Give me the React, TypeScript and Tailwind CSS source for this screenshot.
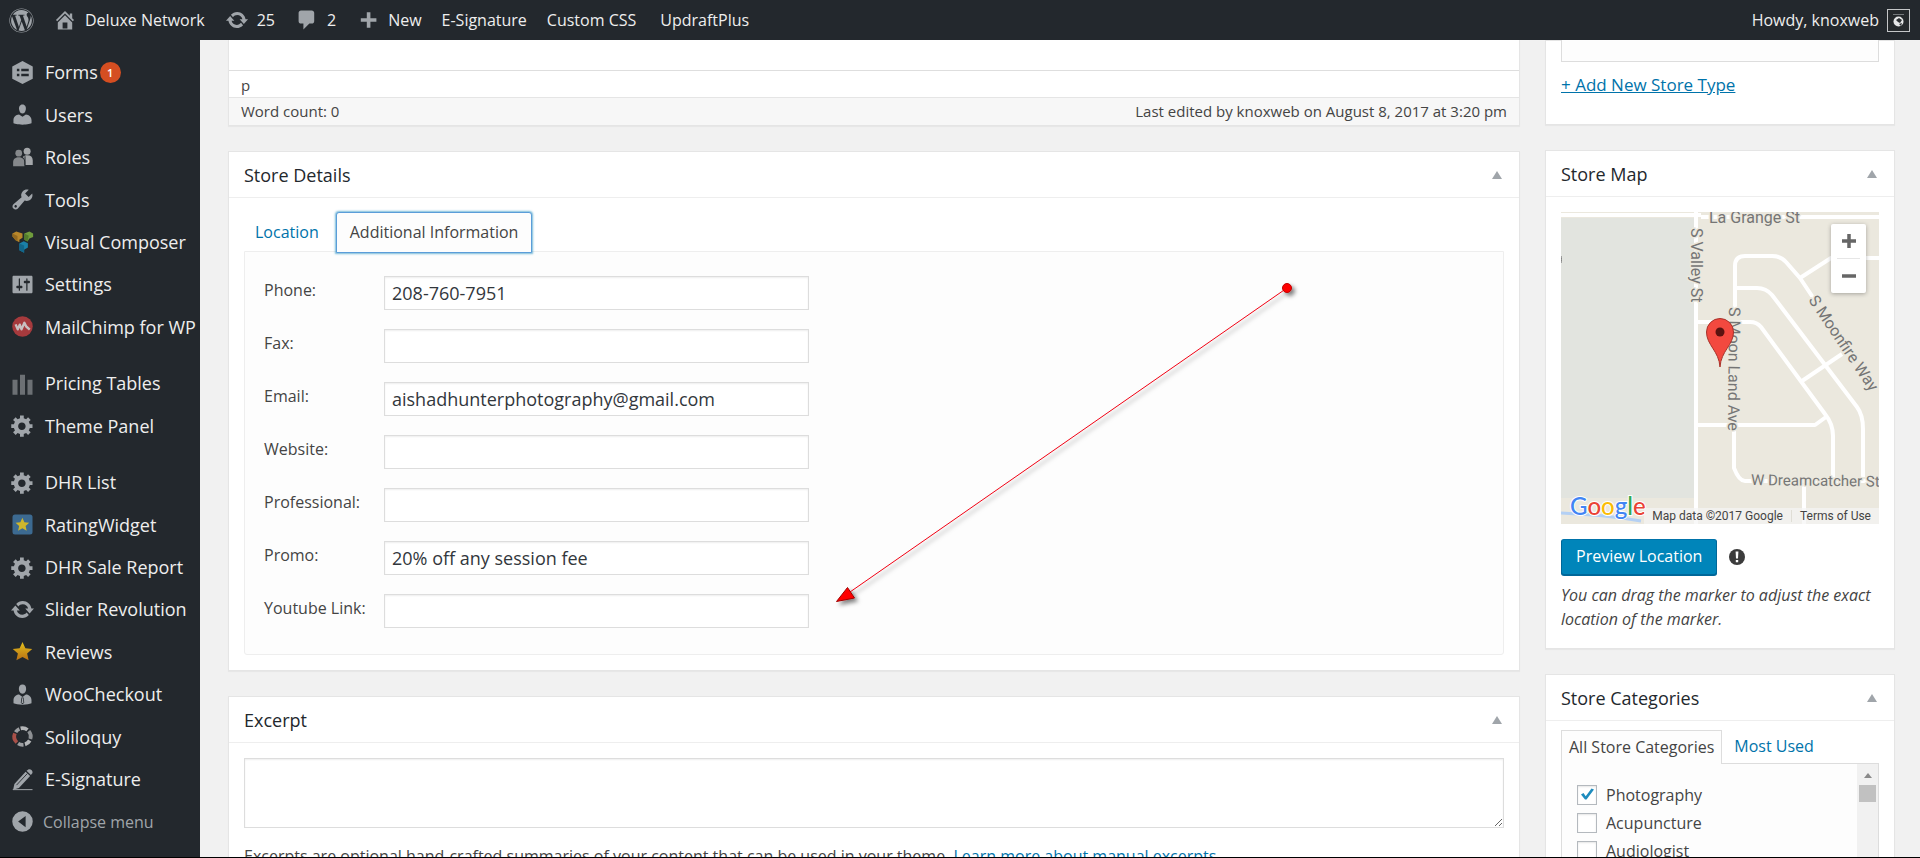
import type { ReactNode } from 'react';
import { FaWordpress } from 'react-icons/fa';

type IconProps = { className?: string };

const PATHS = {
    home: 'M16 8.5l1.53 1.53-1.06 1.06L10 4.6l-6.47 6.49-1.06-1.06L10 2.5l4 4v-2h2v4zm-6-2.46l6 5.99V18H4v-5.97zM12 17v-5H8v5h4z',
    update: 'M10.2 3.28c3.53 0 6.43 2.61 6.92 6h2.08l-3.5 4-3.5-4h2.32c-.45-1.97-2.21-3.45-4.32-3.45-1.45 0-2.73.71-3.54 1.78L4.95 5.66C6.23 4.2 8.11 3.28 10.2 3.28zm-.4 13.44c-3.52 0-6.43-2.61-6.92-6H.8l3.5-4c1.17 1.33 2.33 2.67 3.5 4H5.48c.45 1.97 2.21 3.45 4.32 3.45 1.45 0 2.73-.71 3.54-1.78l1.71 1.95c-1.28 1.46-3.15 2.38-5.25 2.38z',
    comment: 'M5 2h9c1.1 0 2 .9 2 2v7c0 1.1-.9 2-2 2h-2l-5 5v-5H5c-1.1 0-2-.9-2-2V4c0-1.1.9-2 2-2z',
    plus: 'M17 8.5v3h-5v5H9v-5H4v-3h5v-5h3v5z',
    user: 'M10 9.25c-2.27 0-2.73-3.44-2.73-3.44C7 4.02 7.82 2 9.97 2c2.16 0 2.98 2.02 2.71 3.81 0 0-.41 3.44-2.68 3.44zm0 2.57L12.72 10c2.39 0 4.52 2.33 4.52 4.53v2.49s-3.65 1.13-7.24 1.13c-3.65 0-7.24-1.13-7.24-1.13v-2.49c0-2.25 1.94-4.48 4.47-4.48z',
    tools: 'M16.68 9.77c-1.34 1.34-3.3 1.67-4.95.99l-5.41 6.52c-.99.99-2.59.99-3.58 0s-.99-2.59 0-3.57l6.52-5.42c-.68-1.65-.35-3.61.99-4.95 1.28-1.28 3.12-1.62 4.72-1.06l-2.89 2.89 2.82 2.82 2.86-2.87c.53 1.58.18 3.39-1.08 4.65zM3.81 16.21c.4.39 1.04.39 1.43 0 .4-.4.4-1.04 0-1.43-.39-.4-1.03-.4-1.43 0-.39.39-.39 1.03 0 1.43z',
    settings: 'M18 16V4c0-.55-.45-1-1-1H3c-.55 0-1 .45-1 1v12c0 .55.45 1 1 1h14c.55 0 1-.45 1-1zM8 11h1c.55 0 1 .45 1 1s-.45 1-1 1H8v1.5c0 .28-.22.5-.5.5s-.5-.22-.5-.5V13H6c-.55 0-1-.45-1-1s.45-1 1-1h1V5.5c0-.28.22-.5.5-.5s.5.22.5.5V11zm5-2h-1c-.55 0-1-.45-1-1s.45-1 1-1h1V5.5c0-.28.22-.5.5-.5s.5.22.5.5V7h1c.55 0 1 .45 1 1s-.45 1-1 1h-1v5.5c0 .28-.22.5-.5.5s-.5-.22-.5-.5V9z',
    gear: 'M18 12h-2.18c-.17.7-.44 1.35-.81 1.93l1.54 1.54-2.1 2.1-1.54-1.54c-.58.36-1.23.63-1.91.79V19H8v-2.18c-.68-.16-1.33-.43-1.91-.79l-1.54 1.54-2.12-2.12 1.54-1.54c-.36-.58-.63-1.23-.79-1.91H1V9.03h2.17c.16-.7.44-1.35.8-1.94L2.43 5.55l2.1-2.1 1.54 1.54c.58-.37 1.24-.64 1.93-.81V2h3v2.18c.68.16 1.33.43 1.91.79l1.54-1.54 2.12 2.12-1.54 1.54c.36.59.64 1.24.8 1.94H18V12zm-8.5 1.5c1.66 0 3-1.34 3-3s-1.34-3-3-3-3 1.34-3 3 1.34 3 3 3z',
    forms: 'M10 .8l8.2 4.3v9.8L10 19.2l-8.2-4.3V5.100zM5.500 7v2h2V7zm3.500 0v2h6V7zM5.500 11v2h2v-2zm3.500 0v2h6v-2z',
    bars: 'M2 7h4v12H2zM8 3h4v16H8zM14 7h4v12h-4z',
    collapse: 'M10 1.800a8.200 8.200 0 1 0 0 16.400a8.200 8.200 0 0 0 0-16.400zM12.500 5.500v9L6.500 10z',
};

function Icon({ name, className = 'size-[25px]' }: IconProps & { name: keyof typeof PATHS }) {
    return (
        <svg viewBox="0 0 20 20" className={className} fill="currentColor" fillRule="evenodd" aria-hidden="true">
            <path d={PATHS[name]} />
        </svg>
    );
}

function Drawing({ children }: { children: ReactNode }) {
    return (
        <svg viewBox="0 0 20 20" className="size-[25px]" aria-hidden="true">
            {children}
        </svg>
    );
}

const rolesIcon = (
    <Drawing>
        <g fill="#85888b">
            <circle cx="7" cy="6.500" r="2.700" />
            <path d="M2.500 17v-3.500c0-2.500 2-3.800 4.500-3.800s4.500 1.300 4.500 3.800V17z" />
        </g>
        <g fill="#a4a7aa">
            <circle cx="13.700" cy="5" r="2.800" />
            <path d="M10.200 9.500c1-1 2-1.400 3.500-1.400 3 0 4.500 1.500 4.500 4V16h-6v-2.500c0-1.800-.8-3-2-4z" />
        </g>
        <path d="M12 9v7" stroke="#23282d" strokeWidth=".8" />
    </Drawing>
);

const composerIcon = (
    <Drawing>
        <path d="M2 3.500l3-1.500 5 1.500v3.500l-2.500 1.500v2L4.500 9 2 6z" fill="#b8872b" />
        <path d="M2 3.500l4 2v4L4.500 9 2 6z" fill="#93691f" />
        <path d="M11.500 3.500L15.500 2l3 1.500v2.800l-3 1.200-1.500 2.500-2.500-1.500z" fill="#6f9c3c" />
        <path d="M11.500 3.500l3.500 1.800-1 4.700-2.500-1.500z" fill="#527b2c" />
        <path d="M7.500 11.500l3.500-1.700 3.300 1.500v3.500l-3 1.700V19L7.500 17z" fill="#1a80a8" />
        <path d="M7.500 11.500l3.800 1.700V19L7.500 17z" fill="#12668a" />
    </Drawing>
);

const mailchimpIcon = (
    <Drawing>
        <circle cx="10" cy="10" r="8.200" fill="#a63a3d" />
        <path
            d="M4.500 8.300l1.700 4L7.800 8.500l1.400 3.800L11.500 7l1.500 3 2.800 2.500"
            fill="none"
            stroke="#c9bfc0"
            strokeWidth="1.900"
            strokeLinejoin="round"
        />
    </Drawing>
);

const STAR = 'M10 2.300l2.300 5 5.500.6-4.100 3.700 1.200 5.400L10 14.300 5.100 17l1.200-5.400L2.200 7.900l5.500-.6z';

const ratingIcon = (
    <Drawing>
        <rect x="2" y="2" width="16" height="16" rx="2" fill="#3c6a91" />
        <path d={STAR} fill="#cdb62c" transform="translate(2.900 3) scale(.7)" />
    </Drawing>
);

const reviewsIcon = (
    <Drawing>
        <defs>
            <linearGradient id="gold" x1="0" y1="0" x2="0" y2="1">
                <stop offset="0" stopColor="#e2c01c" />
                <stop offset="1" stopColor="#b96f14" />
            </linearGradient>
        </defs>
        <path d={STAR} fill="url(#gold)" />
    </Drawing>
);

const checkoutIcon = (
    <Drawing>
        <g fill="#a0a5aa">
            <path d="M10 9.300c-2 0-2.800-2-2.900-3.700C7 3.500 8 2 10 2s3 1.500 2.900 3.600C12.800 7.300 12 9.300 10 9.300z" />
            <path d="M7.300 10L10 12l2.700-2c2.500 0 4.500 2.200 4.500 4.500V17c-1.500.7-4 1.100-7.200 1.100S4.300 17.700 2.800 17v-2.500C2.800 12.200 4.800 10 7.300 10z" />
        </g>
        <path d="M9.200 12.300h1.600l.6 4.200-1.400 1.300-1.400-1.300z" fill="#23282d" />
        <path d="M9.700 13h.7l.3 3.200-.7.700-.7-.7z" fill="#a0a5aa" />
    </Drawing>
);

const soliloquyIcon = (
    <Drawing>
        <g fill="none" strokeWidth="3">
            <path d="M7.500 3.900A6.600 6.600 0 0 0 4.500 6.500" stroke="#9c9ea1" />
            <path d="M3.900 7.500A6.600 6.600 0 0 0 5.500 14.800" stroke="#a95048" />
            <path d="M8.500 3.500A6.600 6.600 0 0 1 14 4.700" stroke="#b3b5b7" />
            <path d="M15 5.700A6.600 6.600 0 0 1 16.300 12" stroke="#8d9093" />
            <path d="M15.800 13.200A6.600 6.600 0 0 1 12 16.300" stroke="#b3b5b7" />
            <path d="M10.800 16.600A6.600 6.600 0 0 1 6.500 15.600" stroke="#9c9ea1" />
        </g>
    </Drawing>
);

const penIcon = (
    <Drawing>
        <g fill="#a0a5aa">
            <path d="M3.500 13.500L12.500 3.800l3.600 3.300-9 9.600-4.600 1.500z" />
            <path d="M13.200 3L15 1.800c1.800-.2 3.300 1.200 3 3l-1.300 1.600z" />
            <path d="M2.200 17.700H18v.8H2.200z" />
        </g>
        <path d="M5.200 14.500l8.700-9.300" stroke="#23282d" strokeWidth=".7" />
    </Drawing>
);

type MenuItem = { label: string; icon: ReactNode; badge?: number };

const menuGroups: MenuItem[][] = [
    [
        { label: 'Forms', icon: <Icon name="forms" />, badge: 1 },
        { label: 'Users', icon: <Icon name="user" /> },
        { label: 'Roles', icon: rolesIcon },
        { label: 'Tools', icon: <Icon name="tools" /> },
        { label: 'Visual Composer', icon: composerIcon },
        { label: 'Settings', icon: <Icon name="settings" /> },
        { label: 'MailChimp for WP', icon: mailchimpIcon },
    ],
    [
        { label: 'Pricing Tables', icon: <Icon name="bars" className="size-[25px] text-[#6c7074]" /> },
        { label: 'Theme Panel', icon: <Icon name="gear" /> },
    ],
    [
        { label: 'DHR List', icon: <Icon name="gear" /> },
        { label: 'RatingWidget', icon: ratingIcon },
        { label: 'DHR Sale Report', icon: <Icon name="gear" /> },
        { label: 'Slider Revolution', icon: <Icon name="update" /> },
        { label: 'Reviews', icon: reviewsIcon },
        { label: 'WooCheckout', icon: checkoutIcon },
        { label: 'Soliloquy', icon: soliloquyIcon },
        { label: 'E-Signature', icon: penIcon },
    ],
];

const storeFields = [
    { id: 'phone', label: 'Phone:', value: '208-760-7951' },
    { id: 'fax', label: 'Fax:', value: '' },
    { id: 'email', label: 'Email:', value: 'aishadhunterphotography@gmail.com' },
    { id: 'website', label: 'Website:', value: '' },
    { id: 'professional', label: 'Professional:', value: '' },
    { id: 'promo', label: 'Promo:', value: '20% off any session fee' },
    { id: 'youtube', label: 'Youtube Link:', value: '' },
];

const categories = [
    { name: 'Photography', checked: true },
    { name: 'Acupuncture', checked: false },
    { name: 'Audiologist', checked: false },
];

function AdminBar() {
    return (
        <header className="flex h-10 shrink-0 items-center justify-between bg-[#23282d] pr-[10px] text-[#eee]">
            <nav className="flex items-center">
                <a href="#wp" aria-label="About WordPress" className="pr-[19px] pl-[9px] text-[#a0a5aa]">
                    <FaWordpress className="size-[25px]" />
                </a>
                <a href="#site" className="flex items-center gap-2 pr-5">
                    <Icon name="home" className="size-6 text-[#a0a5aa]" />
                    Deluxe Network
                </a>
                <a href="#updates" className="flex items-center gap-2 pr-5">
                    <Icon name="update" className="size-6 text-[#a0a5aa]" />
                    25
                </a>
                <a href="#comments" className="flex items-center gap-2 pr-5">
                    <Icon name="comment" className="size-6 text-[#a0a5aa]" />
                    2
                </a>
                <a href="#new" className="flex items-center gap-2 pr-5">
                    <Icon name="plus" className="size-6 text-[#a0a5aa]" />
                    New
                </a>
                <a href="#esig" className="pr-5">E-Signature</a>
                <a href="#css" className="pr-6">Custom CSS</a>
                <a href="#updraft">UpdraftPlus</a>
            </nav>
            <a href="#profile" className="flex items-center gap-2">
                Howdy, knoxweb
                <svg viewBox="0 0 23 23" className="size-[23px]" aria-hidden="true">
                    <rect x=".5" y=".5" width="22" height="22" fill="#25292c" stroke="#c4c6c8" />
                    <path d="M6 5.500h11" stroke="#74787b" />
                    <circle cx="11.500" cy="12.500" r="5" fill="#e6e7e8" />
                    <path d="M9 11l3-2 3 2-2 3-2-1zM12 15l3-1-1 3z" fill="#2c3033" />
                </svg>
            </a>
        </header>
    );
}

function Sidebar() {
    return (
        <nav className="flex w-[200px] shrink-0 flex-col gap-[14px] bg-[#23282d] pt-[11px] pb-[14px] text-[#eee]">
            {menuGroups.map((group, i) => (
                <ul key={i} className="contents">
                    {group.map((item, j) => (
                        <li
                            key={item.label}
                            className={j > 0 ? '-mt-[14px] flex flex-1 items-center' : 'flex flex-1 items-center'}
                        >
                            <a href="#menu" className="flex items-center gap-[10px] pl-[10px] text-lg whitespace-nowrap">
                                <span className="text-[#a0a5aa]">{item.icon}</span>
                                <span className="flex items-center gap-[2px]">
                                    {item.label}
                                    {item.badge && (
                                        <span className="flex size-[21px] items-center justify-center rounded-full bg-[#d54e21] text-[11px] font-semibold text-white">
                                            {item.badge}
                                        </span>
                                    )}
                                </span>
                            </a>
                        </li>
                    ))}
                </ul>
            ))}
            <button
                type="button"
                className="-mt-[14px] flex flex-1 items-center gap-2 pl-[10px] text-left text-[#a0a5aa]"
            >
                <Icon name="collapse" />
                Collapse menu
            </button>
        </nav>
    );
}

function PostBox({ title, children }: { title?: string; children: ReactNode }) {
    return (
        <section className="border border-[#e5e5e5] bg-white shadow-[0_1px_1px_rgba(0,0,0,0.04)]">
            {title && (
                <div className="flex h-[46px] items-center justify-between border-b border-[#eee] pr-[17px] pl-[15px]">
                    <h2 className="text-lg font-medium text-[#23282d]">{title}</h2>
                    <button type="button" aria-label={`Toggle panel: ${title}`} className="text-[#a0a5aa]">
                        <svg viewBox="0 0 10 8" className="h-2 w-[10px]" fill="currentColor">
                            <path d="M5 0l5 8H0z" />
                        </svg>
                    </button>
                </div>
            )}
            {children}
        </section>
    );
}

/* Callout drawn over the form, pointing at the Youtube field */
function CalloutArrow() {
    return (
        <svg
            viewBox="0 0 500 360"
            className="pointer-events-none absolute top-2 left-[575px] h-[360px] w-[500px]"
            aria-hidden="true"
        >
            <defs>
                <filter id="drop" x="-10%" y="-10%" width="120%" height="120%">
                    <feDropShadow dx="3" dy="3" stdDeviation="2" floodColor="#000" floodOpacity=".5" />
                </filter>
            </defs>
            <g filter="url(#drop)">
                <path d="M467 28L30 332" stroke="#f00014" strokeWidth="1" />
                <path d="M16.500 341.500L27.500 327.500l7 10.500z" fill="#fe0000" stroke="#a00000" />
                <circle cx="467" cy="28" r="4.500" fill="#fe0000" stroke="#c00000" />
            </g>
        </svg>
    );
}

function StoreDetails() {
    return (
        <PostBox title="Store Details">
            <div className="px-[15px] pt-[14px] pb-[15px]">
                <div role="tablist" className="relative z-10 -mb-[2px] flex gap-[6px]">
                    <button type="button" role="tab" aria-selected="false" className="px-[11px] pb-[2px] text-[#0073aa]">
                        Location
                    </button>
                    <button
                        type="button"
                        role="tab"
                        aria-selected="true"
                        className="h-[41px] rounded-t-[3px] border border-[#5b9dd9] bg-[#fdfdfd] px-[13px] pb-[2px] shadow-[0_0_2px_1px_rgba(30,140,190,0.6)]"
                    >
                        Additional Information
                    </button>
                </div>
                <div className="relative flex flex-col gap-[19px] rounded-b-[3px] border border-[#eee] bg-[#fdfdfd] px-[19px] pt-6 pb-[26px]">
                    {storeFields.map((field) => (
                        <div key={field.id} className="flex items-start">
                            <label htmlFor={field.id} className="w-[120px] leading-7">
                                {field.label}
                            </label>
                            <input
                                id={field.id}
                                type="text"
                                defaultValue={field.value}
                                className="h-[34px] w-[425px] border border-[#ddd] bg-white px-[7px] text-lg text-[#32373c] shadow-[inset_0_1px_2px_rgba(0,0,0,0.07)]"
                            />
                        </div>
                    ))}
                    <CalloutArrow />
                </div>
            </div>
        </PostBox>
    );
}

function StreetMap() {
    return (
        <div className="relative overflow-hidden font-[Roboto,sans-serif]">
            <svg viewBox="0 0 318 312" className="block w-full" role="img" aria-label="Store map">
                <rect width="318" height="312" fill="#ebe8de" />
                <path d="M0 6h133v280H0z" fill="#e2e4df" />
                <path d="M0 301c25 1 50 3 80 8" fill="none" stroke="#b4d0f4" strokeWidth="3" />
                <path d="M0 44c.6 2 .6 5 0 7" fill="none" stroke="#777" />
                <g fill="none" stroke="#fff" strokeWidth="4" strokeLinejoin="round">
                    <path d="M0 3h140M140 5h178M135 0v312" />
                    <path d="M137 110h52q7 0 11 5l64 87q8 10 8 22v42" />
                    <path d="M174 96V54q0-10 10-10h27q9 0 14 6l14 16 14 21" />
                    <path d="M174 76h22q9 0 15 7l85 112q6 8 6 22v48" />
                    <path d="M239 66l31-20h48M241 169l40-27" />
                    <path d="M137 213h117l11-8" />
                    <path d="M173 218v38q5 13 11 13h134M243 272v40" />
                </g>
                <g fill="#757575" stroke="#ebe8de" strokeWidth="3" strokeLinejoin="round" paintOrder="stroke" fontSize="16">
                    <text x="148" y="11">La Grange St</text>
                    <text transform="translate(130 16) rotate(90)">S Valley St</text>
                    <text transform="translate(168 95) rotate(90.500)">S Moon Land Ave</text>
                    <text transform="translate(247 88) rotate(56)">S Moonfire Way</text>
                    <text transform="translate(190 273) rotate(.7)" fontSize="15">W Dreamcatcher St</text>
                </g>
                <path
                    d="M159 155c-1-16-13.500-22-13.500-35a13.500 13.500 0 0 1 27 0c0 13-12.500 19-13.500 35z"
                    fill="#f3493f"
                    stroke="#a8322a"
                />
                <circle cx="159" cy="120" r="4.500" fill="#5a1310" />
                <text
                    x="9"
                    y="303"
                    fontSize="24"
                    fontFamily="Lato, sans-serif"
                    fontWeight="500"
                    stroke="#fff"
                    strokeWidth="2"
                    paintOrder="stroke"
                >
                    <tspan fill="#4285f4">G</tspan>
                    <tspan fill="#ea4335">o</tspan>
                    <tspan fill="#fbbc05">o</tspan>
                    <tspan fill="#4285f4">g</tspan>
                    <tspan fill="#34a853">l</tspan>
                    <tspan fill="#ea4335">e</tspan>
                </text>
            </svg>
            <div className="absolute top-3 right-[13px] flex w-[35px] flex-col rounded-[2px] bg-white text-[#666] shadow-[0_1px_4px_rgba(0,0,0,0.3)]">
                <button type="button" aria-label="Zoom in" className="flex h-[34px] items-center justify-center">
                    <svg viewBox="0 0 14 14" className="size-[14px]">
                        <path d="M7 0v14M0 7h14" stroke="currentColor" strokeWidth="3.500" />
                    </svg>
                </button>
                <span className="mx-[6px] h-px bg-[#e6e6e6]" />
                <button type="button" aria-label="Zoom out" className="flex h-[34px] items-center justify-center">
                    <svg viewBox="0 0 14 14" className="size-[14px]">
                        <path d="M0 7h14" stroke="currentColor" strokeWidth="3.500" />
                    </svg>
                </button>
            </div>
            <div className="absolute right-0 bottom-0 flex h-4 items-center bg-[#f5f5f5]/70 text-xs leading-none text-[#444]">
                <span className="border-r border-[#e0ded6] px-2">Map data ©2017 Google</span>
                <a href="#terms" className="px-2">Terms of Use</a>
            </div>
        </div>
    );
}

function StoreMap() {
    return (
        <PostBox title="Store Map">
            <div className="px-[15px] pt-[15px] pb-[17px]">
                <StreetMap />
                <div className="mt-[15px] flex items-center gap-3">
                    <button
                        type="button"
                        className="h-9 rounded-[3px] border border-[#006799] border-t-[#0073aa] bg-[#0085ba] px-[14px] pb-[2px] text-white shadow-[0_1px_0_#006799]"
                    >
                        Preview Location
                    </button>
                    <svg viewBox="0 0 16 16" className="size-4" aria-hidden="true">
                        <circle cx="8" cy="8" r="8" fill="#3c3c3c" />
                        <path d="M6.600 2.500h2.800L9 9.500H7zM6.800 11h2.400v2.300H6.800z" fill="#fff" />
                    </svg>
                </div>
                <p className="mt-2 italic">
                    You can drag the marker to adjust the exact location of the marker.
                </p>
            </div>
        </PostBox>
    );
}

function StoreCategories() {
    return (
        <PostBox title="Store Categories">
            <div className="px-[15px] pt-[9px]">
                <div role="tablist" className="flex">
                    <button
                        type="button"
                        role="tab"
                        aria-selected="true"
                        className="relative -mb-px h-[34px] border border-b-0 border-[#ddd] bg-[#fdfdfd] px-[7px] pb-[2px]"
                    >
                        All Store Categories
                    </button>
                    <button type="button" role="tab" aria-selected="false" className="px-3 pb-px text-[#0073aa]">
                        Most Used
                    </button>
                </div>
                <div className="flex h-[250px] justify-between border border-[#ddd] bg-[#fdfdfd]">
                    <ul className="flex flex-col gap-1 px-[15px] pt-[19px]">
                        {categories.map((category) => (
                            <li key={category.name}>
                                <label className="flex items-center gap-[9px]">
                                    <span className="relative size-5">
                                        <input
                                            type="checkbox"
                                            defaultChecked={category.checked}
                                            className="peer block size-5 appearance-none border border-[#b4b9be] bg-white shadow-[inset_0_1px_2px_rgba(0,0,0,0.1)]"
                                        />
                                        <svg
                                            viewBox="0 0 20 20"
                                            className="pointer-events-none absolute inset-0 hidden peer-checked:block"
                                            aria-hidden="true"
                                        >
                                            <path d="M4 9.500L6.500 8l2.200 3.200L14.500 3.500 17 4.500l-7.500 10H8z" fill="#1e8cbe" />
                                        </svg>
                                    </span>
                                    {category.name}
                                </label>
                            </li>
                        ))}
                    </ul>
                    <div className="flex w-[21px] flex-col items-center bg-[#f1f1f1] pt-[9px]">
                        <svg viewBox="0 0 8 5" className="h-[5px] w-2" aria-hidden="true">
                            <path d="M4 0l4 5H0z" fill="#8a8a8a" />
                        </svg>
                        <div className="mt-[7px] h-[17px] w-[17px] bg-[#c1c1c1]" />
                    </div>
                </div>
            </div>
        </PostBox>
    );
}

export default function App() {
    return (
        <div className="flex h-screen flex-col overflow-hidden border-b border-black bg-[#f1f1f1] font-['Open_Sans',sans-serif] text-base text-[#444]">
            <AdminBar />
            <div className="flex min-h-0 flex-1">
                <Sidebar />
                <main className="flex min-w-0 flex-1 items-start gap-[25px] overflow-hidden pr-[25px] pl-7">
                    <div className="flex min-w-0 flex-1 flex-col gap-[25px]">
                        <section className="border border-t-0 border-[#e5e5e5] bg-white pt-[30px] shadow-[0_1px_1px_rgba(0,0,0,0.04)]">
                            <div className="h-[27px] border-t border-[#dedede] px-3 text-[15px] leading-7">p</div>
                            <div className="flex h-7 items-center justify-between border-t border-[#e5e5e5] bg-[#f7f7f7] px-3 text-[15px]">
                                <span>Word count: 0</span>
                                <span>Last edited by knoxweb on August 8, 2017 at 3:20 pm</span>
                            </div>
                        </section>
                        <StoreDetails />
                        <PostBox title="Excerpt">
                            <div className="px-[15px] pt-[15px] pb-4">
                                <textarea
                                    aria-label="Excerpt"
                                    className="block h-[70px] w-full border border-[#ddd] shadow-[inset_0_1px_2px_rgba(0,0,0,0.07)]"
                                />
                                <p className="mt-4">
                                    Excerpts are optional hand-crafted summaries of your content that can be used in your theme.{' '}
                                    <a href="#excerpts" className="text-[#0073aa] underline">
                                        Learn more about manual excerpts
                                    </a>
                                    .
                                </p>
                            </div>
                        </PostBox>
                    </div>
                    <div className="flex w-[350px] shrink-0 flex-col gap-[25px]">
                        <PostBox>
                            <div className="-mt-px px-[15px] pb-[27px]">
                                <div className="h-[22px] border border-t-0 border-[#ddd] bg-[#fdfdfd]" />
                                <a href="#add" className="mt-[11px] block text-[17px] leading-6 font-medium text-[#0073aa] underline">
                                    + Add New Store Type
                                </a>
                            </div>
                        </PostBox>
                        <StoreMap />
                        <StoreCategories />
                    </div>
                </main>
            </div>
        </div>
    );
}
